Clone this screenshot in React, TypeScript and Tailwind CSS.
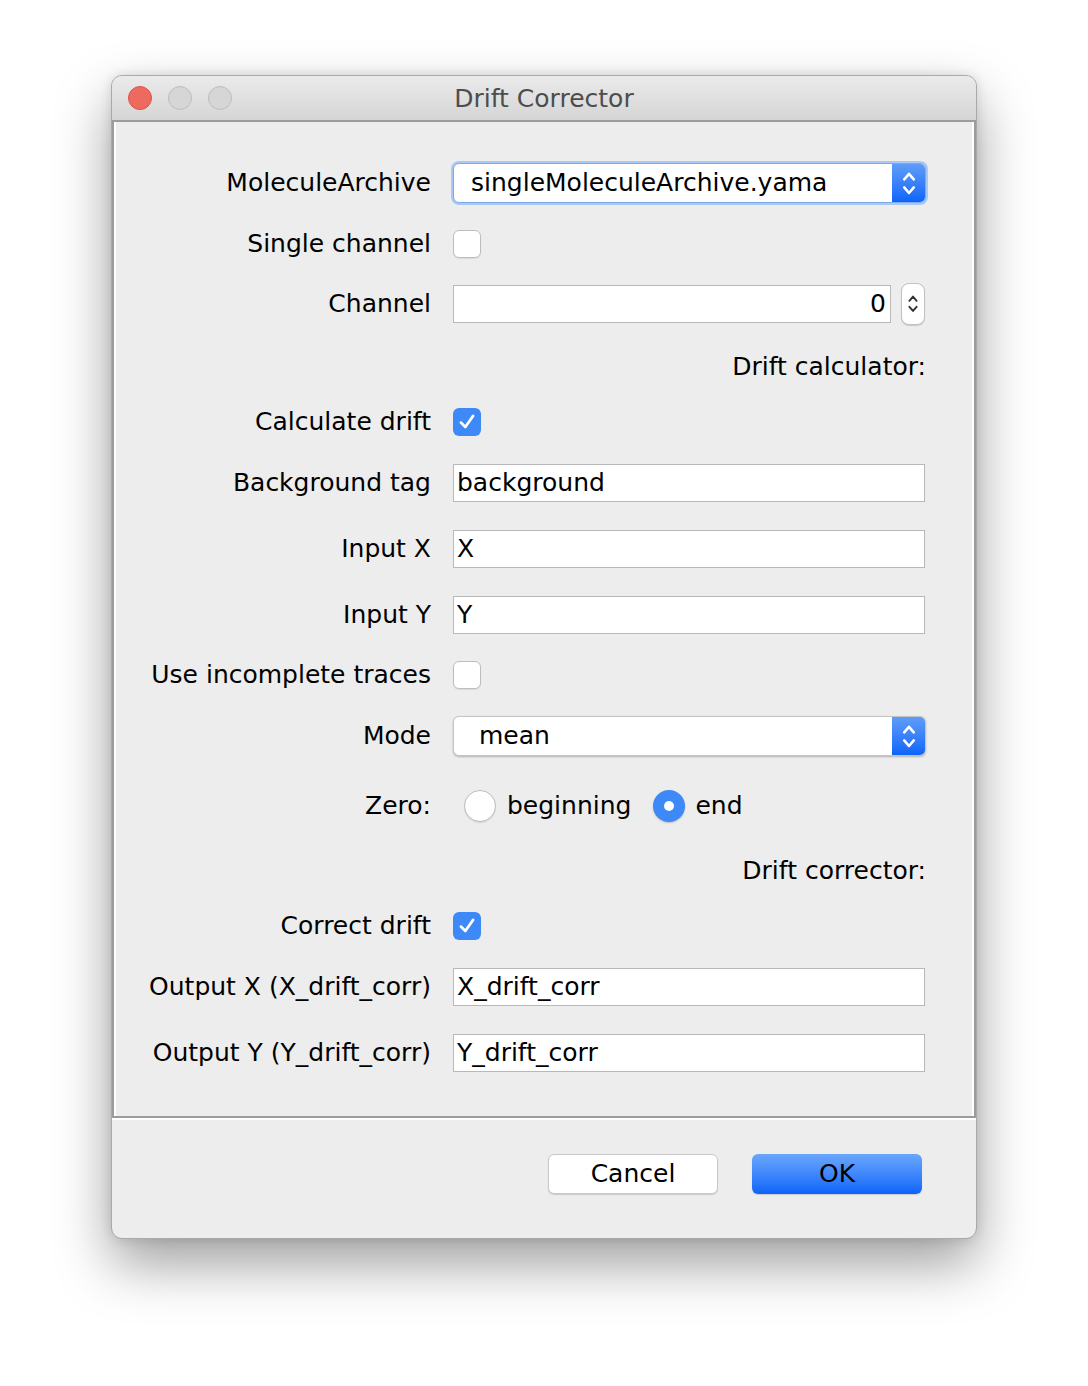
import React from 'react'

const font = { fontFamily: '"DejaVu Sans", "Noto Sans", sans-serif' }

function Chevrons({ color = 'white', size = 14 }: { color?: string; size?: number }) {
  return (
    <svg width={size} height={size * 1.8} viewBox="0 0 10 18" fill="none">
      <path d="M2 6.5 L5 3 L8 6.5" stroke={color} strokeWidth="1.6" strokeLinecap="round" strokeLinejoin="round" />
      <path d="M2 11.5 L5 15 L8 11.5" stroke={color} strokeWidth="1.6" strokeLinecap="round" strokeLinejoin="round" />
    </svg>
  )
}

function Select({ value, focused }: { value: string; focused?: boolean }) {
  return (
    <div
      className={
        'flex h-[40px] w-[473px] items-stretch overflow-hidden rounded-[6px] bg-white ' +
        (focused
          ? 'border border-[#7fa9e8] shadow-[0_0_0_2px_#a9c8f5]'
          : 'border border-[#c4c4c4] shadow-[0_1px_2px_rgba(0,0,0,0.25)]')
      }
    >
      <div className={'flex flex-1 items-center text-[25px] text-black ' + (focused ? 'pl-[17px]' : 'pl-[25px]')}>{value}</div>
      <div className="flex w-[33px] items-center justify-center bg-gradient-to-b from-[#5f9cf8] to-[#0a64fa]">
        <Chevrons size={16} />
      </div>
    </div>
  )
}

function Checkbox({ checked }: { checked?: boolean }) {
  if (checked) {
    return (
      <div className="flex h-[28px] w-[28px] items-center justify-center rounded-[6px] bg-[#3c89f7]">
        <svg width="20" height="20" viewBox="0 0 18 18" fill="none">
          <path d="M3.5 9.5 L7.5 13.5 L14.5 3.5" stroke="white" strokeWidth="2.4" strokeLinecap="round" strokeLinejoin="round" />
        </svg>
      </div>
    )
  }
  return <div className="h-[28px] w-[28px] rounded-[6px] border border-[#bdbdbd] bg-white shadow-[0_1px_1px_rgba(0,0,0,0.08)]" />
}

function TextField({ value }: { value: string }) {
  return (
    <div className="flex h-[38px] w-[472px] items-center border border-[#b8b8b8] bg-white pl-[3px] text-[25px] text-black">
      {value}
    </div>
  )
}

function Row({ label, children, className }: { label: string; children?: React.ReactNode; className?: string }) {
  return (
    <div className={'flex h-[40px] items-center ' + (className ?? '')}>
      <div className="w-[317px] shrink-0 text-right text-[25px] text-black">{label}</div>
      <div className="ml-[22px] flex items-center">{children}</div>
    </div>
  )
}

function SectionLabel({ text, className }: { text: string; className?: string }) {
  return (
    <div className={'flex h-[40px] items-center justify-end pr-[48px] text-[25px] text-black ' + (className ?? '')}>
      {text}
    </div>
  )
}

export default function App() {
  return (
    <div className="min-h-[1386px] w-[1088px] bg-white pl-[111px] pt-[75px]" style={font}>
      <div className="w-[866px] overflow-hidden rounded-[11px] border border-[#a9a9a9] bg-[#ededed] shadow-[0_25px_55px_rgba(0,0,0,0.38),0_0_12px_rgba(0,0,0,0.12)]">
        {/* title bar */}
        <div className="relative flex h-[44px] items-center bg-gradient-to-b from-[#ebebeb] to-[#d5d5d5]">
          <div className="flex items-center gap-[16px] pl-[16px]">
            <div className="h-[24px] w-[24px] rounded-full border border-[#d9534c] bg-[#ee6a5f]" />
            <div className="h-[24px] w-[24px] rounded-full border border-[#bcbcbc] bg-[#d6d6d6]" />
            <div className="h-[24px] w-[24px] rounded-full border border-[#bcbcbc] bg-[#d6d6d6]" />
          </div>
          <div className="absolute inset-0 flex items-center justify-center pt-[2px] text-[25px] text-[#4d4d4d]">Drift Corrector</div>
        </div>

        {/* content panel */}
        <div className="border-2 border-[#9c9c9c] shadow-[inset_2px_0_0_#ffffff,inset_-2px_0_0_#ffffff] pb-[43px] pt-[41px]">
          <Row label="MoleculeArchive">
            <Select value="singleMoleculeArchive.yama" focused />
          </Row>
          <Row label="Single channel" className="mt-[21px]">
            <Checkbox />
          </Row>
          <Row label="Channel" className="mt-[20px]">
            <div className="flex h-[38px] w-[438px] items-center justify-end border border-[#b8b8b8] bg-white pr-[4px] text-[25px] text-black">
              0
            </div>
            <div className="ml-[10px] flex h-[42px] w-[24px] items-center justify-center rounded-[8px] border border-[#c2c2c2] bg-white shadow-[0_1px_1px_rgba(0,0,0,0.15)]">
              <Chevrons color="#333333" size={12} />
            </div>
          </Row>
          <SectionLabel text="Drift calculator:" className="mt-[23px]" />
          <Row label="Calculate drift" className="mt-[15px]">
            <Checkbox checked />
          </Row>
          <Row label="Background tag" className="mt-[21px]">
            <TextField value="background" />
          </Row>
          <Row label="Input X" className="mt-[26px]">
            <TextField value="X" />
          </Row>
          <Row label="Input Y" className="mt-[26px]">
            <TextField value="Y" />
          </Row>
          <Row label="Use incomplete traces" className="mt-[20px]">
            <Checkbox />
          </Row>
          <Row label="Mode" className="mt-[21px]">
            <Select value="mean" />
          </Row>
          <Row label="Zero:" className="mt-[30px]">
            <div className="ml-[11px] flex items-center">
              <div className="h-[32px] w-[32px] rounded-full border border-[#bdbdbd] bg-white shadow-[0_1px_1px_rgba(0,0,0,0.1)]" />
              <span className="ml-[11px] text-[25px] text-black">beginning</span>
              <div className="ml-[22px] flex h-[32px] w-[32px] items-center justify-center rounded-full bg-[#3c89f7] shadow-[0_1px_2px_rgba(0,0,0,0.2)]">
                <div className="h-[10px] w-[10px] rounded-full bg-white" />
              </div>
              <span className="ml-[10px] text-[25px] text-black">end</span>
            </div>
          </Row>
          <SectionLabel text="Drift corrector:" className="mt-[25px]" />
          <Row label="Correct drift" className="mt-[15px]">
            <Checkbox checked />
          </Row>
          <Row label="Output X (X_drift_corr)" className="mt-[21px]">
            <TextField value="X_drift_corr" />
          </Row>
          <Row label="Output Y (Y_drift_corr)" className="mt-[26px]">
            <TextField value="Y_drift_corr" />
          </Row>
        </div>

        {/* footer */}
        <div className="flex h-[120px] items-start justify-end gap-[34px] border-t-2 border-white pr-[54px] pt-[34px]">
          <button className="flex h-[40px] w-[170px] items-center justify-center rounded-[6px] border border-[#c8c8c8] bg-white text-[25px] text-black shadow-[0_1px_1px_rgba(0,0,0,0.15)]">
            Cancel
          </button>
          <button className="flex h-[40px] w-[170px] items-center justify-center rounded-[6px] bg-gradient-to-b from-[#6aa6fb] to-[#0a63fa] text-[25px] text-black shadow-[0_1px_1px_rgba(0,0,0,0.15)]">
            OK
          </button>
        </div>
      </div>
    </div>
  )
}
